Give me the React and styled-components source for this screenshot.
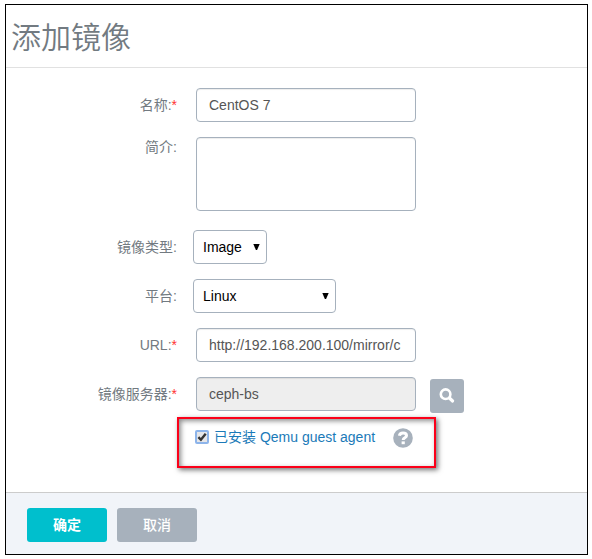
import React, { useState } from "react";
import styled, { createGlobalStyle } from "styled-components";

const GlobalStyle = createGlobalStyle`
  *, *::before, *::after { box-sizing: border-box; }
  body {
    margin: 0;
    background: #fff;
    font: 14px/20px "Liberation Sans", "Noto Sans CJK SC", sans-serif;
    color: #727a81;
  }
  input, select, textarea, button { font: inherit; margin: 0; }
`;

const Dialog = styled.form`
  margin: 4px 4px 4px 5px;
  border: 1px solid #000;
  background: #fff;
`;

const Header = styled.header`
  padding: 13px 5px 9px;
  border-bottom: 1px solid #e1e1e1;
`;

const Title = styled.h1`
  margin: 0;
  font-size: 30px;
  line-height: 40px;
  font-weight: 350;
`;

const Body = styled.div`
  padding: 20px 0 24px;
`;

const Row = styled.div`
  display: grid;
  grid-template-columns: 171px 1fr;
  column-gap: ${(p) => (p.$wide ? 19 : 16)}px;
  margin-bottom: ${(p) => p.$gap ?? 15}px;
`;

const Label = styled.label`
  padding-top: ${(p) => (p.$top ? 0 : 7)}px;
  text-align: right;
  white-space: nowrap;
`;

const Required = styled.span`
  color: #f33;
`;

const Input = styled.input`
  width: 220px;
  height: 34px;
  padding: 6px 12px;
  border: 1px solid #a6b1bd;
  border-radius: 4px;
  outline: none;
  color: #555;
  background: ${(p) => (p.readOnly ? "#eee" : "#fff")};
  box-shadow: inset 0 1px 1px rgba(0, 0, 0, 0.075);
`;

const TextArea = styled(Input).attrs({ as: "textarea" })`
  display: block;
  height: 74px;
  resize: none;
`;

const SelectBox = styled.div`
  position: relative;
  width: ${(p) => p.$width}px;
`;

const Select = styled.select`
  appearance: none;
  display: block;
  width: 100%;
  height: 34px;
  padding: 0 24px 0 9px;
  border: 1px solid #a6b1bd;
  border-radius: 4px;
  outline: none;
  color: #000;
  background: #fff;
`;

const Arrow = styled.svg`
  position: absolute;
  right: 7px;
  top: 14px;
  pointer-events: none;
`;

const ServerLine = styled.div`
  display: flex;
  align-items: flex-start;
  gap: 14px;
`;

const SearchButton = styled.button`
  display: flex;
  align-items: center;
  justify-content: center;
  width: 34px;
  height: 34px;
  margin-top: 2px;
  padding: 0;
  border: 0;
  border-radius: 3px;
  color: #fff;
  background: #a7b1bc;
`;

const Highlight = styled.div`
  display: flex;
  align-items: flex-start;
  width: 259px;
  height: 51px;
  margin-left: 171px;
  padding: 8px 16px;
  border: 2px solid #fb0019;
  box-shadow: 2px 2px 5px rgba(0, 0, 0, 0.55), inset 2px 2px 5px rgba(0, 0, 0, 0.45);
`;

const CheckLabel = styled.label`
  display: flex;
  align-items: center;
  gap: 5px;
  color: #1b7ab8;
  white-space: nowrap;
`;

const CheckBox = styled.span`
  position: relative;
  display: flex;
  width: 14px;
  height: 14px;
`;

const Check = styled.input`
  appearance: none;
  width: 14px;
  height: 14px;
  border: 2px solid #8db4ea;
  border-radius: 2px;
  background: #e6e6e8;
  outline: none;
  & + svg { visibility: hidden; }
  &:checked + svg { visibility: visible; }
`;

const Tick = styled.svg`
  position: absolute;
  inset: 0;
  pointer-events: none;
`;

const HelpButton = styled.button`
  display: flex;
  margin-left: 18px;
  padding: 1px 0 0;
  border: 0;
  background: none;
`;

const Footer = styled.footer`
  display: flex;
  gap: 10px;
  padding: 15px 21px 12px;
  border-top: 1px solid #ccc;
  background: #f1f4f9;
`;

const ActionButton = styled.button`
  width: 80px;
  height: 34px;
  padding: 0;
  border: 0;
  border-radius: 3px;
  color: #fff;
  font-weight: ${(p) => (p.$primary ? 700 : 500)};
  background: ${(p) => (p.$primary ? "#00bfcd" : "#a7b1bc")};
`;

function Field({ id, label, required, wide, gap, top, children }) {
  return (
    <Row $wide={wide} $gap={gap}>
      <Label htmlFor={id} $top={top}>
        {label}:{required && <Required>*</Required>}
      </Label>
      {children}
    </Row>
  );
}

function Dropdown({ id, width, options }) {
  return (
    <SelectBox $width={width}>
      <Select id={id}>
        {options.map((o) => (
          <option key={o}>{o}</option>
        ))}
      </Select>
      <Arrow width="7" height="6" viewBox="0 0 7 6" aria-hidden="true">
        <path d="M0.3 0h6.4L4.1 6H2.9z" fill="#000" />
      </Arrow>
    </SelectBox>
  );
}

export default function App() {
  const [agent, setAgent] = useState(true);
  return (
    <>
      <GlobalStyle />
      <Dialog onSubmit={(e) => e.preventDefault()}>
        <Header>
          <Title>添加镜像</Title>
        </Header>
        <Body>
          <Field id="name" label="名称" required wide>
            <Input id="name" defaultValue="CentOS 7" />
          </Field>
          <Field id="intro" label="简介" wide gap={19} top>
            <TextArea id="intro" />
          </Field>
          <Field id="type" label="镜像类型">
            <Dropdown id="type" width={74} options={["Image", "ISO"]} />
          </Field>
          <Field id="platform" label="平台">
            <Dropdown id="platform" width={143} options={["Linux", "Windows"]} />
          </Field>
          <Field id="url" label="URL" required wide>
            <Input id="url" defaultValue="http://192.168.200.100/mirror/c" />
          </Field>
          <Field id="server" label="镜像服务器" required wide gap={4}>
            <ServerLine>
              <Input id="server" defaultValue="ceph-bs" readOnly />
              <SearchButton type="button" aria-label="搜索">
                <svg width="16" height="16" viewBox="0 0 16 16" fill="none" stroke="currentColor" aria-hidden="true">
                  <circle cx="6.6" cy="6.2" r="4.8" strokeWidth="2.6" />
                  <path d="M10.4 10l3.2 3" strokeWidth="3.2" strokeLinecap="round" />
                </svg>
              </SearchButton>
            </ServerLine>
          </Field>
          <Highlight>
            <CheckLabel htmlFor="agent">
              <CheckBox>
                <Check id="agent" type="checkbox" checked={agent} onChange={(e) => setAgent(e.target.checked)} />
                <Tick width="14" height="14" viewBox="0 0 14 14" aria-hidden="true">
                  <path d="M3.4 7.2l2.5 2.6 4.8-6" fill="none" stroke="#333" strokeWidth="2.4" />
                </Tick>
              </CheckBox>
              已安装 Qemu guest agent
            </CheckLabel>
            <HelpButton type="button" aria-label="帮助">
              <svg width="20" height="20" viewBox="0 0 20 20" aria-hidden="true">
                <circle cx="10" cy="10" r="9.8" fill="#a7b1bc" />
                <path d="M6.4 7.8C6.7 5.8 8 5 10 5c2.1 0 3.5 1 3.5 2.7 0 2.2-3.3 2-3.3 4.2" fill="none" stroke="#fff" strokeWidth="3" />
                <path d="M8.6 13.4h3.2v2.8H8.6z" fill="#fff" />
              </svg>
            </HelpButton>
          </Highlight>
        </Body>
        <Footer>
          <ActionButton type="submit" $primary>确定</ActionButton>
          <ActionButton type="button">取消</ActionButton>
        </Footer>
      </Dialog>
    </>
  );
}
